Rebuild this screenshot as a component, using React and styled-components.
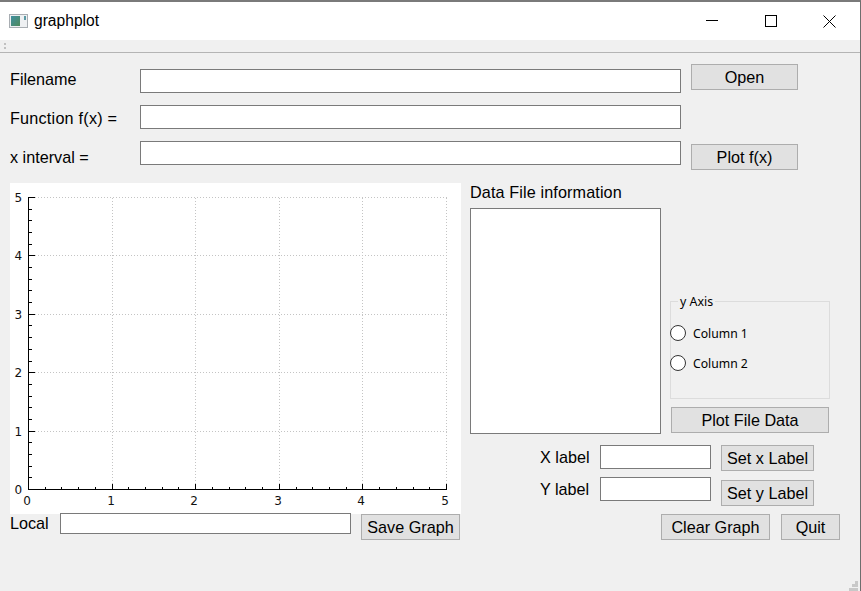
import React from "react";
import styled, { createGlobalStyle } from "styled-components";

const Global = createGlobalStyle`
  html, body { margin: 0; padding: 0; background: #f0f0f0; }
  * { box-sizing: border-box; }
`;

const Window = styled.div`
  position: relative;
  width: 861px;
  height: 591px;
  display: flex;
  flex-direction: column;
  background: #f0f0f0;
  border-top: 2px solid #7a7a7a;
  border-right: 1px solid #6e6e6e;
  font-family: "Liberation Sans", Arial, sans-serif;
  font-size: 16.2px;
  color: #000;
  overflow: hidden;
`;
const TitleBar = styled.header`
  height: 38px;
  flex: none;
  display: flex;
  align-items: center;
  background: #fff;
  padding: 0 1px 0 9px;
`;
const TitleText = styled.span`
  margin-left: 6px;
  font-size: 15.6px;
  flex: 1;
`;
const WinButton = styled.div`
  width: 59px;
  height: 38px;
  display: flex;
  align-items: center;
  justify-content: center;
`;
const ToolBar = styled.div`
  height: 13px;
  flex: none;
  border-bottom: 1px solid #b4b4b4;
  padding: 3px 0 0 4px;
  display: flex;
`;
const Main = styled.main`
  flex: 1;
  padding: 11px 0 0 10px;
  display: flex;
  flex-direction: column;
`;
const FormGrid = styled.div`
  display: grid;
  grid-template-columns: 130px 541px 107px;
  grid-template-rows: 41px 36px 42px;
`;
const FieldLabel = styled.label`
  height: 24px;
  line-height: 24px;
  margin-top: ${(p) => p.$top || 0}px;
  letter-spacing: ${(p) => p.$track || 0}px;
  white-space: nowrap;
`;
const TextInput = styled.div`
  width: ${(p) => p.$w}px;
  height: ${(p) => p.$h || 24}px;
  margin-top: ${(p) => p.$top || 0}px;
  margin-left: ${(p) => p.$left || 0}px;
  background: #fff;
  border: 1px solid #7a7a7a;
  flex: none;
`;
const Button = styled.button`
  width: ${(p) => p.$w}px;
  height: 26px;
  margin-top: ${(p) => p.$top || 0}px;
  margin-left: ${(p) => p.$left || 0}px;
  flex: none;
  padding: 0;
  background: #e1e1e1;
  border: 1px solid #adadad;
  font: 16.2px "Liberation Sans", Arial, sans-serif;
  color: #000;
`;
const Lower = styled.section`
  display: grid;
  grid-template-columns: 451px 370px;
  column-gap: 9px;
`;
const LeftColumn = styled.div`
  display: flex;
  flex-direction: column;
`;
const PlotArea = styled.div`
  width: 451px;
  height: 331px;
  background: #fff;
`;
const SaveRow = styled.div`
  display: flex;
  margin-top: -1px;
`;
const LocalLabel = styled.label`
  width: 50px;
  height: 21px;
  line-height: 21px;
`;
const RightColumn = styled.div`
  display: flex;
  flex-direction: column;
`;
const InfoRow = styled.div`
  display: flex;
  height: 251px;
  margin-bottom: 11px;
`;
const InfoColumn = styled.div`
  width: 191px;
  display: flex;
  flex-direction: column;
`;
const InfoLabel = styled.div`
  height: 18px;
  line-height: 18px;
  margin-bottom: 7px;
  letter-spacing: 0.12px;
  white-space: nowrap;
`;
const InfoBox = styled.div`
  height: 226px;
  background: #fff;
  border: 1px solid #7a7a7a;
`;
const AxisColumn = styled.div`
  margin-left: 9px;
  padding-top: 118px;
  display: flex;
  flex-direction: column;
`;
const GroupBox = styled.div`
  position: relative;
  width: 160px;
  height: 98px;
  border: 1px solid #dcdcdc;
  padding-top: 23px;
  display: flex;
  flex-direction: column;
  gap: 14px;
`;
const GroupTitle = styled.span`
  position: absolute;
  left: 7px;
  top: -7px;
  padding: 0 2px;
  background: #f0f0f0;
  font: 12.4px/14px "Noto Sans", Tahoma, sans-serif;
`;
const RadioRow = styled.div`
  display: flex;
  align-items: flex-start;
  height: 16px;
  margin-left: -1px;
  font: 12.2px/18px "Noto Sans", Tahoma, sans-serif;
`;
const RadioDot = styled.span`
  width: 16px;
  height: 16px;
  border-radius: 50%;
  background: #fff;
  border: 1px solid #333;
  margin-right: 7px;
  flex: none;
`;
const LabelRow = styled.div`
  display: flex;
  height: ${(p) => p.$h}px;
  padding-left: 70px;
`;
const SideLabel = styled.label`
  width: 60px;
  height: 24px;
  line-height: 24px;
`;
const ActionRow = styled.div`
  display: flex;
  justify-content: flex-end;
  gap: 11px;
`;
const Grip = styled.svg`
  position: absolute;
  right: 1px;
  bottom: 0;
`;

const px = (v) => Math.floor(18.5 + v * 83.6) + 0.5;
const py = (v) => Math.floor(306.5 - v * 58.4) + 0.5;
const range = [0, 1, 2, 3, 4, 5];
const minor = [];
for (let i = 0; i < 5; i++) for (let j = 1; j < 5; j++) minor.push(i + j / 5);

function Chart() {
  return (
    <svg width="451" height="331" style={{ display: "block" }}>
      <g stroke="#c4c4c4" strokeDasharray="1 2" shapeRendering="crispEdges">
        {range.slice(1).map((v) => (
          <line key={v} x1={px(v)} x2={px(v)} y1={py(5)} y2={py(0)} />
        ))}
        {range.slice(1).map((v) => (
          <line key={v} x1={px(0)} x2={px(5)} y1={py(v)} y2={py(v)} />
        ))}
      </g>
      <g stroke="#000" shapeRendering="crispEdges">
        <line x1={px(0)} x2={px(0)} y1={py(5) - 0.5} y2={py(0) + 0.5} />
        <line x1={px(0)} x2={px(5) + 0.5} y1={py(0)} y2={py(0)} />
        {range.map((v) => (
          <line key={v} x1={px(v)} x2={px(v)} y1={py(0)} y2={py(0) - 6} />
        ))}
        {range.map((v) => (
          <line key={v} x1={px(0)} x2={px(0) + 6} y1={py(v)} y2={py(v)} />
        ))}
        {minor.map((v) => (
          <line key={v} x1={px(v)} x2={px(v)} y1={py(0)} y2={py(0) - 3} />
        ))}
        {minor.map((v) => (
          <line key={v} x1={px(0)} x2={px(0) + 3} y1={py(v)} y2={py(v)} />
        ))}
      </g>
      <g fontFamily="'DejaVu Sans', Tahoma, sans-serif" fontSize="12" fill="#111">
        {range.map((v) => (
          <text key={v} x={4.5} y={py(v) + 4.5}>{v}</text>
        ))}
        {range.map((v) => (
          <text key={v} x={px(v) - 1.5} y={322} textAnchor="middle">{v}</text>
        ))}
      </g>
    </svg>
  );
}

export default function App() {
  return (
    <Window>
      <Global />
      <TitleBar>
        <svg width="19" height="16" viewBox="0 0 19 16">
          <rect x="0.5" y="1.5" width="18" height="13" fill="#eef0f2" stroke="#a8adb2" />
          <defs>
            <linearGradient id="ic" x1="0" y1="0" x2="1" y2="1">
              <stop offset="0" stopColor="#3f8fa0" />
              <stop offset="1" stopColor="#4f8a5c" />
            </linearGradient>
          </defs>
          <rect x="2" y="3" width="9" height="10" fill="url(#ic)" />
          <rect x="15" y="3" width="2" height="4" fill="#5b9aa5" />
        </svg>
        <TitleText>graphplot</TitleText>
        <WinButton>
          <svg width="12" height="12"><line x1="0" x2="12" y1="5.5" y2="5.5" stroke="#000" /></svg>
        </WinButton>
        <WinButton>
          <svg width="12" height="12"><rect x="0.5" y="0.5" width="11" height="11" fill="none" stroke="#000" /></svg>
        </WinButton>
        <WinButton>
          <svg width="13" height="13"><path d="M0.5 0.5 L12.5 12.5 M12.5 0.5 L0.5 12.5" stroke="#000" fill="none" /></svg>
        </WinButton>
      </TitleBar>
      <ToolBar>
        <svg width="3" height="7">
          <rect x="0" y="0" width="2" height="2" fill="#c0c0c0" />
          <rect x="0" y="4" width="2" height="2" fill="#c0c0c0" />
        </svg>
      </ToolBar>
      <Main>
        <FormGrid>
          <FieldLabel $top={3}>Filename</FieldLabel>
          <TextInput $w={541} $top={5} />
          <Button $w={107} $left={10}>Open</Button>
          <FieldLabel $top={1} $track={0.22}>Function f(x) =</FieldLabel>
          <TextInput $w={541} />
          <span />
          <FieldLabel $top={4}>x interval =</FieldLabel>
          <TextInput $w={541} />
          <Button $w={107} $left={10} $top={3}>Plot f(x)</Button>
        </FormGrid>
        <Lower>
          <LeftColumn>
            <PlotArea><Chart /></PlotArea>
            <SaveRow>
              <LocalLabel>Local</LocalLabel>
              <TextInput $w={291} $h={21} />
              <Button $w={99} $left={10} $top={1}>Save Graph</Button>
            </SaveRow>
          </LeftColumn>
          <RightColumn>
            <InfoRow>
              <InfoColumn>
                <InfoLabel>Data File information</InfoLabel>
                <InfoBox />
              </InfoColumn>
              <AxisColumn>
                <GroupBox>
                  <GroupTitle>y Axis</GroupTitle>
                  <RadioRow><RadioDot />Column 1</RadioRow>
                  <RadioRow><RadioDot />Column 2</RadioRow>
                </GroupBox>
                <Button $w={158} $left={1} $top={8}>Plot File Data</Button>
              </AxisColumn>
            </InfoRow>
            <LabelRow $h={32}>
              <SideLabel>X label</SideLabel>
              <TextInput $w={111} />
              <Button $w={93} $left={10}>Set x Label</Button>
            </LabelRow>
            <LabelRow $h={37}>
              <SideLabel>Y label</SideLabel>
              <TextInput $w={111} />
              <Button $w={93} $left={10} $top={3}>Set y Label</Button>
            </LabelRow>
            <ActionRow>
              <Button $w={109}>Clear Graph</Button>
              <Button $w={59}>Quit</Button>
            </ActionRow>
          </RightColumn>
        </Lower>
      </Main>
      <Grip width="10" height="10">
        <g fill="#c8c8c8">
          <rect x="6" y="0" width="3" height="3" />
          <rect x="3" y="3" width="3" height="3" />
          <rect x="6" y="3" width="3" height="3" />
          <rect x="0" y="7" width="3" height="3" />
          <rect x="3" y="7" width="3" height="3" />
          <rect x="6" y="7" width="3" height="3" />
        </g>
      </Grip>
    </Window>
  );
}
